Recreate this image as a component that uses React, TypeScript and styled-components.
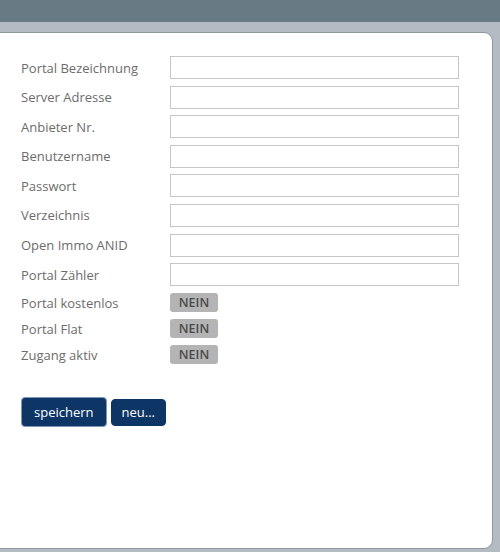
import { createGlobalStyle, styled } from 'styled-components';

const GlobalStyle = createGlobalStyle`
  html, body {
    margin: 0;
    padding: 0;
    background: #b4bcc3;
  }
  * {
    box-sizing: border-box;
  }
`;

const Page = styled.div`
  width: 500px;
  height: 552px;
  display: flex;
  flex-direction: column;
  background: #b4bcc3;
  font-family: 'Open Sans', 'Liberation Sans', sans-serif;
  overflow: hidden;
`;

const TopBar = styled.div`
  height: 22px;
  background: #687a83;
  flex-shrink: 0;
`;

const Content = styled.div`
  flex: 1;
  display: flex;
  padding: 10px 7px 3px 0;
`;

const Panel = styled.div`
  flex: 1;
  margin-left: -2px;
  background: #fff;
  border: 1px solid #8e969d;
  border-radius: 0 9px 9px 0;
  padding: 23px 0 0 22px;
  display: flex;
  flex-direction: column;
`;

const Form = styled.form`
  display: flex;
  flex-direction: column;
`;

const Row = styled.div<{ $gap: number }>`
  display: grid;
  grid-template-columns: 149px 289px;
  align-items: center;
  margin-bottom: ${(p) => p.$gap}px;
`;

const Label = styled.label`
  font-size: 13px;
  color: #6c6c6c;
  white-space: nowrap;
`;

const Input = styled.input`
  height: 23px;
  width: 289px;
  border: 1px solid #c6c6c6;
  outline: none;
  background: #fff;
  padding: 0 4px;
`;

const Badge = styled.span`
  width: 48px;
  height: 19px;
  border-radius: 3px;
  background: #b4b4b4;
  color: #4a4a4a;
  font-size: 12.5px;
  font-weight: 600;
  display: flex;
  align-items: center;
  justify-content: center;
`;

const Actions = styled.div`
  display: flex;
  align-items: center;
  gap: 4px;
  margin-top: 26px;
`;

const Button = styled.button<{ $focused?: boolean }>`
  background: #0d3566;
  color: #fff;
  border: 1px solid ${(p) => (p.$focused ? '#7e98b4' : '#0d3566')};
  border-radius: 4px;
  height: ${(p) => (p.$focused ? 30 : 27)}px;
  padding: 0 ${(p) => (p.$focused ? 12 : 10)}px;
  font-family: 'Open Sans', 'Liberation Sans', sans-serif;
  font-size: 13px;
  cursor: pointer;
`;

const fields = [
  'Portal Bezeichnung',
  'Server Adresse',
  'Anbieter Nr.',
  'Benutzername',
  'Passwort',
  'Verzeichnis',
  'Open Immo ANID',
  'Portal Zähler',
];

const flags = ['Portal kostenlos', 'Portal Flat', 'Zugang aktiv'];

export default function App() {
  return (
    <>
      <GlobalStyle />
      <Page>
        <TopBar />
        <Content>
          <Panel>
            <Form onSubmit={(e) => e.preventDefault()}>
              {fields.map((f, i) => (
                <Row key={f} $gap={i === fields.length - 1 ? 7 : 6.6}>
                  <Label>{f}</Label>
                  <Input type={f === 'Passwort' ? 'password' : 'text'} />
                </Row>
              ))}
              {flags.map((f) => (
                <Row key={f} $gap={7}>
                  <Label>{f}</Label>
                  <Badge>NEIN</Badge>
                </Row>
              ))}
              <Actions>
                <Button type="submit" $focused>
                  speichern
                </Button>
                <Button type="button">neu...</Button>
              </Actions>
            </Form>
          </Panel>
        </Content>
      </Page>
    </>
  );
}
